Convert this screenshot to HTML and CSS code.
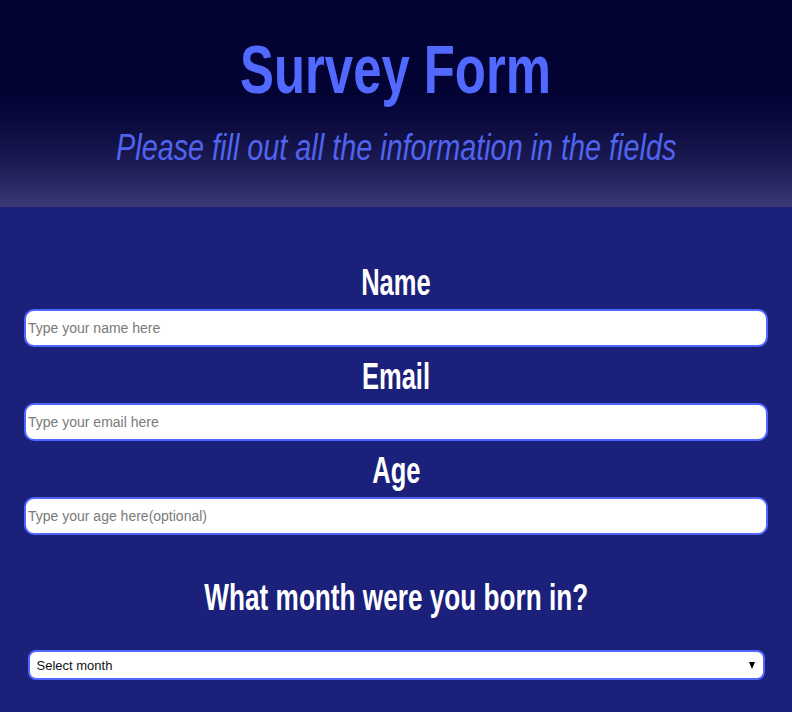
FILE: index.html
```html
<!DOCTYPE html>
<html lang="en">
<head>
<meta charset="utf-8">
<title>Survey Form</title>
<link rel="stylesheet" href="styles.css">
</head>
<body>
<header class="hero">
  <h1 class="title"><span class="condensed">Survey Form</span></h1>
  <p class="subtitle"><span class="condensed">Please fill out all the information in the fields</span></p>
</header>
<main class="content">
  <form class="survey">
    <label class="field-label" for="name"><span class="condensed">Name</span></label>
    <input class="text-input" id="name" type="text" placeholder="Type your name here">
    <label class="field-label" for="email"><span class="condensed">Email</span></label>
    <input class="text-input" id="email" type="email" placeholder="Type your email here">
    <label class="field-label" for="age"><span class="condensed">Age</span></label>
    <input class="text-input" id="age" type="number" placeholder="Type your age here(optional)">
    <h2 class="question"><span class="condensed">What month were you born in?</span></h2>
    <span class="select-wrap">
      <select class="month-select">
        <option>Select month</option>
      </select>
    </span>
  </form>
</main>
</body>
</html>
```
FILE: styles.css
```css
html, body {
  margin: 0;
  padding: 0;
}
body {
  background: #1b217a;
  font-family: "Liberation Sans Narrow", "Liberation Sans", Arial, sans-serif;
  width: 792px;
  height: 712px;
  overflow: hidden;
}
.condensed {
  display: inline-block;
}
.hero {
  height: 207px;
  box-sizing: border-box;
  padding-top: 30px;
  text-align: center;
  background: linear-gradient(to bottom, #020233 0%, #020233 45%, #0b0b3e 60%, #1d1c54 80%, #3b3877 100%);
}
.title {
  margin: 0;
  height: 80px;
  line-height: 80px;
  font-size: 62px;
  font-weight: bold;
  color: #5269ff;
}
.title .condensed {
  transform: scale(0.82, 1.1);
}
.subtitle {
  margin: 18px 0 0;
  height: 40px;
  line-height: 40px;
  font-size: 36px;
  font-style: italic;
  color: #5064f0;
}
.subtitle .condensed {
  transform: scale(0.8, 1);
}
.content {
  padding-top: 46px;
}
.survey {
  display: flex;
  flex-direction: column;
  align-items: center;
}
.field-label {
  display: block;
  height: 56px;
  line-height: 59px;
  font-size: 30px;
  font-weight: bold;
  color: #ffffff;
  text-align: center;
}
.field-label .condensed {
  transform: scale(0.85, 1.22);
}
.text-input {
  box-sizing: border-box;
  width: 744px;
  height: 38px;
  border: 2px solid #4f66ff;
  border-radius: 10px;
  background: #fff;
  padding: 0 2px;
  font-family: "Liberation Sans", Arial, sans-serif;
  font-size: 14px;
  color: #333;
  outline: none;
}
.text-input::placeholder {
  color: #7a7a7a;
}
.question {
  margin: 0;
  height: 115px;
  line-height: 124px;
  font-size: 34px;
  font-weight: bold;
  color: #ffffff;
}
.question .condensed {
  transform: scale(0.77, 1.1);
}
.select-wrap {
  position: relative;
  display: block;
  width: 737px;
}
.select-wrap::after {
  content: "";
  position: absolute;
  right: 10px;
  top: 12px;
  border-left: 3.5px solid transparent;
  border-right: 3.5px solid transparent;
  border-top: 7px solid #000;
  pointer-events: none;
}
.month-select {
  display: block;
  box-sizing: border-box;
  width: 737px;
  height: 30px;
  border: 2px solid #4f66ff;
  border-radius: 8px;
  background: #fff;
  padding: 0 7px;
  -webkit-appearance: none;
  appearance: none;
  font-family: "Liberation Sans", Arial, sans-serif;
  font-size: 13px;
  color: #111;
  outline: none;
}
```
